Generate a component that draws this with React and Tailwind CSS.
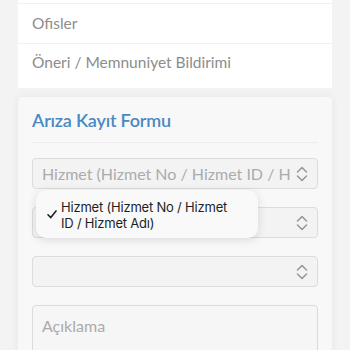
import React from 'react'

const Chevrons = () => (
  <svg width="14" height="18" viewBox="0 0 14 18" fill="none" stroke="#9a9a9a" strokeWidth="1.6" strokeLinecap="round" strokeLinejoin="round">
    <path d="M2.5 7 L7 2.5 L11.5 7" />
    <path d="M2.5 11 L7 15.5 L11.5 11" />
  </svg>
)

function Select({ value }) {
  return (
    <div className="h-[31px] flex items-center justify-between rounded-[4px] border border-[#dcdcdc] bg-[#f3f3f3] pl-[9px] pr-[8px]">
      <span className="text-[16px] text-[#ababab] whitespace-nowrap overflow-hidden">{value}</span>
      <span className="shrink-0 ml-1">
        <Chevrons />
      </span>
    </div>
  )
}

export default function App() {
  return (
    <div className="w-[350px] h-[350px] overflow-hidden bg-[#f3f3f3] px-[18px] font-['Lato',sans-serif]">
      <div className="-mt-[6px] bg-white">
        <div className="h-[10px] border-b border-[#f0f0f0]" />
        <div className="h-[40px] flex items-center px-[14px] pt-[1px] border-b border-[#f0f0f0] text-[15.5px] text-[#8c8c8c]">
          Ofisler
        </div>
        <div className="h-[44px] flex items-start pt-[7px] px-[14px] text-[15.5px] text-[#8c8c8c]">
          Öneri / Memnuniyet Bildirimi
        </div>
      </div>

      <div className="mt-[9px] bg-[#f8f8f8] rounded-t-[4px] shadow-[0_0_8px_rgba(0,0,0,0.06)] px-[14px] pb-10">
        <div className="h-[46px] flex items-end pb-[8px] border-b border-[#ececec]">
          <span className="text-[18px] font-semibold text-[#4a88c2] tracking-[-0.2px]">Arıza Kayıt Formu</span>
        </div>

        <div className="mt-[15px]">
          <Select value="Hizmet (Hizmet No / Hizmet ID / Hizmet Adı)" />
          <div className="relative mt-[18px]">
            <Select value="" />
            <div className="absolute left-[4px] -top-[17px] w-[222px] h-[48px] rounded-[10px] bg-[#f9f9f9] shadow-[0_2px_10px_rgba(0,0,0,0.12)] flex items-center font-['Inter',sans-serif]">
              <span className="w-[25px] pl-[11px] flex items-center">
                <svg width="10" height="9" viewBox="0 0 10 9" fill="none" stroke="#222" strokeWidth="1.6" strokeLinecap="round" strokeLinejoin="round">
                  <path d="M1 4.8 L3.8 7.6 L9 1" />
                </svg>
              </span>
              <span className="text-[13px] tracking-[-0.2px] leading-[16px] text-[#1e1e1e] pt-[2px]">
                Hizmet (Hizmet No / Hizmet
                <br />
                ID / Hizmet Adı)
              </span>
            </div>
          </div>
          <div className="mt-[18px]">
            <Select value="" />
          </div>
          <div className="mt-[18px] h-[70px] rounded-[4px] border border-[#dcdcdc] bg-[#f6f6f6] px-[9px] pt-[8px] text-[16px] text-[#ababab]">
            Açıklama
          </div>
        </div>
      </div>
    </div>
  )
}
